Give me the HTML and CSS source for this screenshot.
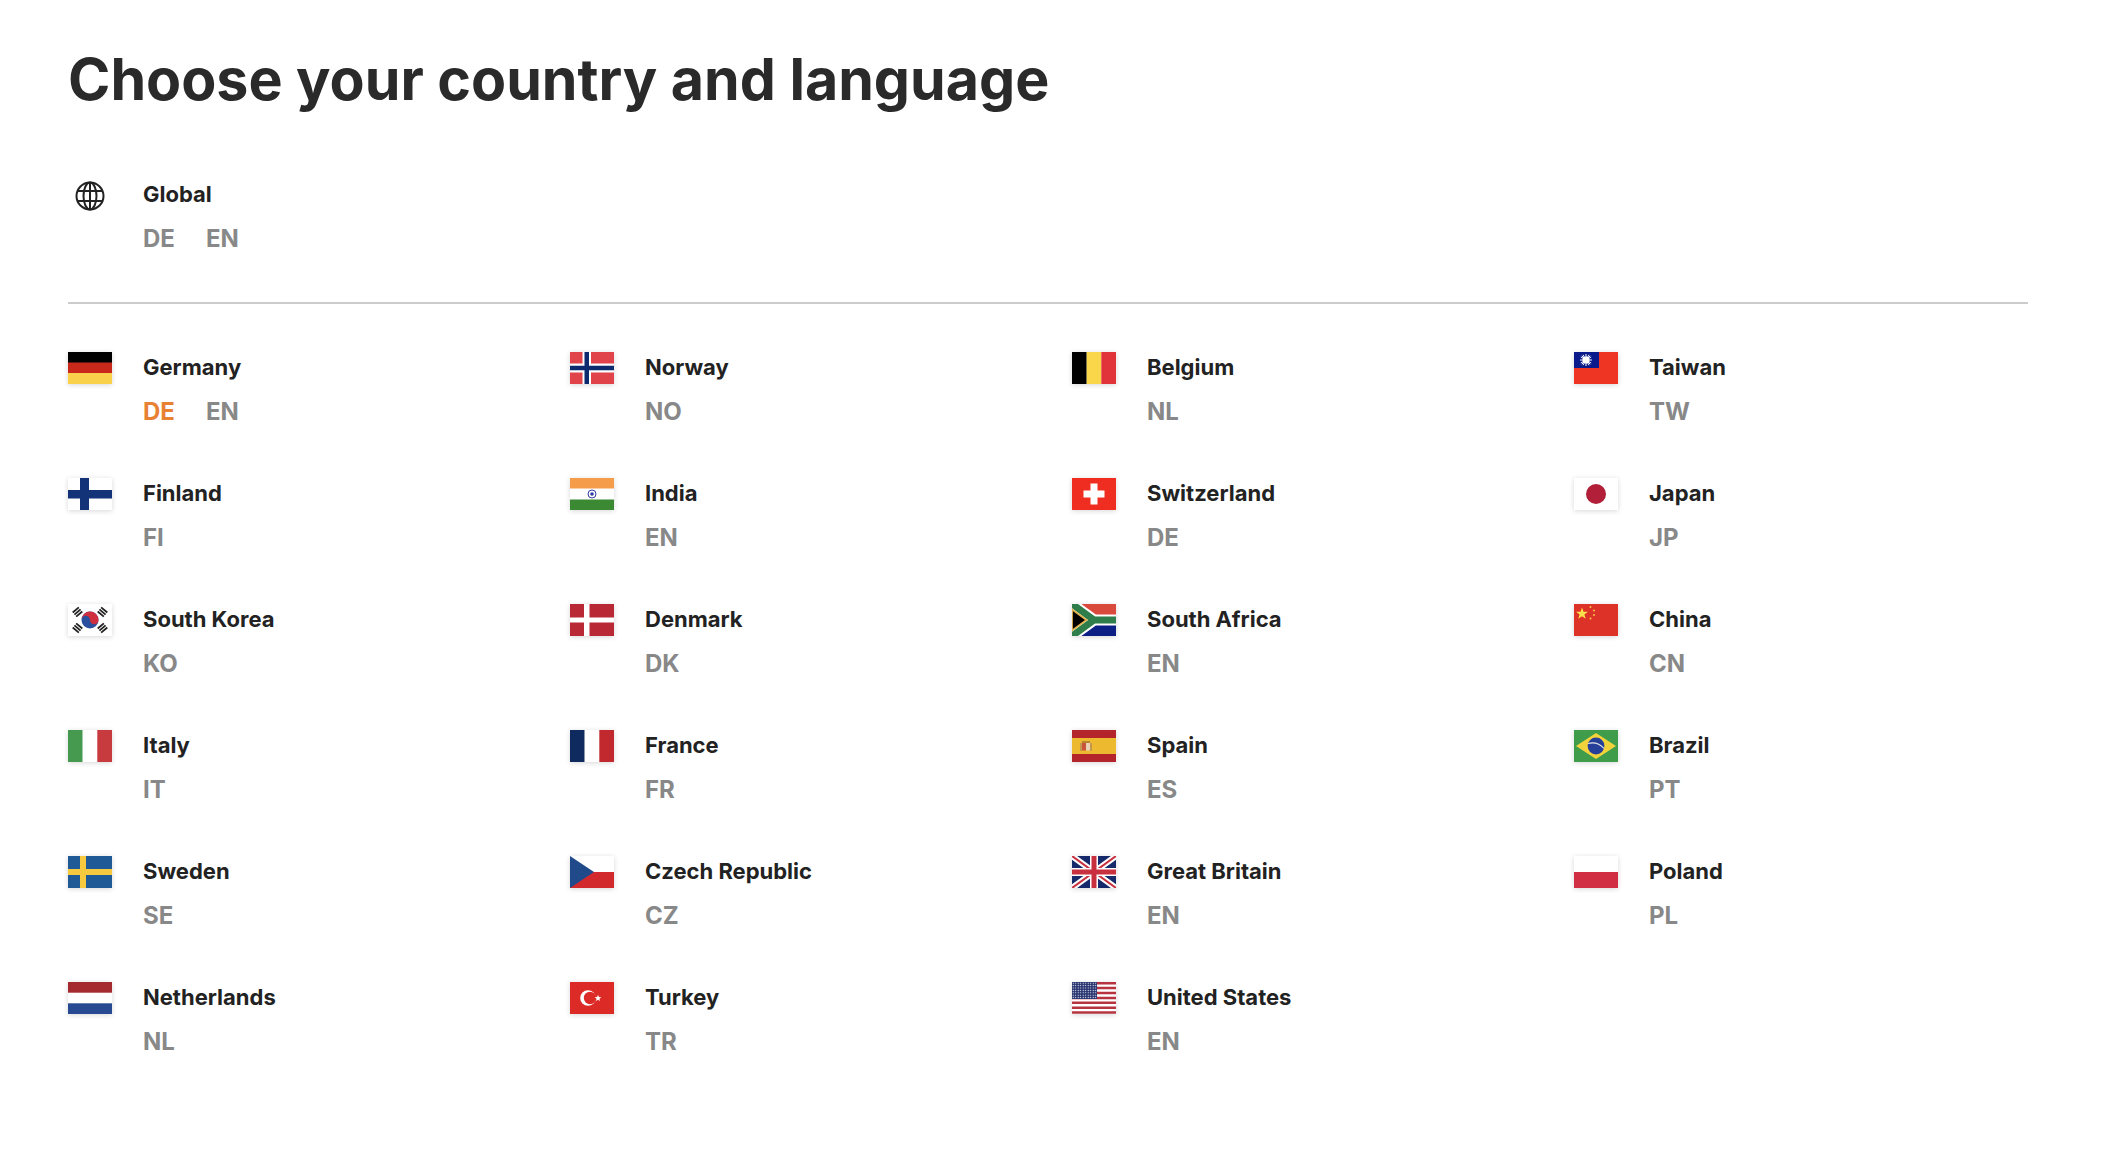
FILE: index.html
```html
<!DOCTYPE html>
<html lang="en">
<head>
<meta charset="utf-8">
<title>Choose your country and language</title>
<link rel="stylesheet" href="styles.css">
</head>
<body>
<main class="page">
<h1 class="title">Choose your country and language</h1>
<section class="global item">
  <div class="globe-box"><svg class="globe" viewBox="0 0 32 32" fill="none" stroke="#222" stroke-width="2"><circle cx="16" cy="16" r="13.5"/><ellipse cx="16" cy="16" rx="6.5" ry="13.5"/><path d="M16 2.5v27M3.5 11h25M3.5 21h25"/></svg></div>
  <div class="text"><div class="name">Global</div><div class="langs"><span>DE</span><span>EN</span></div></div>
</section>
<hr class="divider">
<section class="grid">

<div class="item"><svg class="flag" viewBox="0 0 44 32"><rect width="44" height="32" fill="#f9d14a"/><rect width="44" height="21" fill="#c8291b"/><rect width="44" height="10.5" fill="#000"/></svg><div class="text"><div class="name">Germany</div><div class="langs"><span class="active">DE</span><span>EN</span></div></div></div>

<div class="item"><svg class="flag" viewBox="0 0 44 32"><rect width="44" height="32" fill="#e0434a"/><path d="M12.5 0h8.500v32h-8.500zM0 11.500h44v9H0z" fill="#fff"/><path d="M14.500 0h4.500v32h-4.500zM0 13.800h44v4.400H0z" fill="#0b2b6e"/></svg><div class="text"><div class="name">Norway</div><div class="langs"><span>NO</span></div></div></div>

<div class="item"><svg class="flag" viewBox="0 0 44 32"><rect width="14.700" height="32" fill="#000"/><rect x="14.700" width="14.700" height="32" fill="#f9d64a"/><rect x="29.300" width="14.700" height="32" fill="#e0343a"/></svg><div class="text"><div class="name">Belgium</div><div class="langs"><span>NL</span></div></div></div>

<div class="item"><svg class="flag" viewBox="0 0 44 32"><rect width="44" height="32" fill="#ee3423"/><rect width="25" height="16" fill="#0a1a8a"/><g stroke="#fff" stroke-width="1"><path d="M12 2v12M6 8h12M7.800 3.800l8.400 8.400M16.200 3.800l-8.400 8.400M9 2.800l6 10.400M15 2.800L9 13.200M6.800 5l10.400 6M17.200 5L6.800 11"/></g><circle cx="12" cy="8" r="3.500" fill="#fff"/></svg><div class="text"><div class="name">Taiwan</div><div class="langs"><span>TW</span></div></div></div>

<div class="item"><svg class="flag" viewBox="0 0 44 32"><rect width="44" height="32" fill="#fff"/><path d="M12 0h9v32h-9zM0 12h44v8.500H0z" fill="#123377"/></svg><div class="text"><div class="name">Finland</div><div class="langs"><span>FI</span></div></div></div>

<div class="item"><svg class="flag" viewBox="0 0 44 32"><rect width="44" height="32" fill="#fff"/><rect width="44" height="10.500" fill="#f59c4a"/><rect y="21.500" width="44" height="10.500" fill="#3b8a33"/><circle cx="22" cy="16" r="4" fill="#fff" stroke="#2d3c9e"/><circle cx="22" cy="16" r="1.800" fill="#2d3c9e"/></svg><div class="text"><div class="name">India</div><div class="langs"><span>EN</span></div></div></div>

<div class="item"><svg class="flag" viewBox="0 0 44 32"><rect width="44" height="32" fill="#ef2e21"/><path d="M18.500 5.500h7v7h7v7h-7v7h-7v-7h-7v-7h7z" fill="#fff"/></svg><div class="text"><div class="name">Switzerland</div><div class="langs"><span>DE</span></div></div></div>

<div class="item"><svg class="flag" viewBox="0 0 44 32"><rect width="44" height="32" fill="#fff"/><circle cx="22" cy="16" r="10" fill="#b11f38"/></svg><div class="text"><div class="name">Japan</div><div class="langs"><span>JP</span></div></div></div>

<div class="item"><svg class="flag" viewBox="0 0 44 32"><rect width="44" height="32" fill="#fff"/><circle cx="22" cy="16" r="8.500" fill="#2a4f9e"/><path d="M13.500 16a8.500 8.500 0 0 1 17 0 4.250 4.250 0 0 1-8.500 0 4.250 4.250 0 0 0-8.500 0z" fill="#cf2f3f"/><g fill="#222"><path transform="translate(9.500 8) rotate(-40)" d="M-4-3.600h8v1.800h-8zM-4-.9h8v1.800h-8zM-4 1.800h8v1.800h-8z"/><path transform="translate(34.500 8) rotate(40)" d="M-4-3.600h8v1.800h-8zM-4-.9h8v1.800h-8zM-4 1.800h8v1.800h-8z"/><path transform="translate(9.500 24) rotate(40)" d="M-4-3.600h8v1.800h-8zM-4-.9h8v1.800h-8zM-4 1.800h8v1.800h-8z"/><path transform="translate(34.500 24) rotate(-40)" d="M-4-3.600h8v1.800h-8zM-4-.9h8v1.800h-8zM-4 1.800h8v1.800h-8z"/></g></svg><div class="text"><div class="name">South Korea</div><div class="langs"><span>KO</span></div></div></div>

<div class="item"><svg class="flag" viewBox="0 0 44 32"><rect width="44" height="32" fill="#b92835"/><path d="M14 0h5.500v32H14zM0 13.400h44v5.200H0z" fill="#fff"/></svg><div class="text"><div class="name">Denmark</div><div class="langs"><span>DK</span></div></div></div>

<div class="item"><svg class="flag" viewBox="0 0 44 32"><rect width="44" height="16" fill="#d9493c"/><rect y="16" width="44" height="16" fill="#0b1f85"/><path d="M0 0l22 16L0 32z" fill="#000"/><path d="M0 0l22 16h22M0 32l22-16" fill="none" stroke="#fff" stroke-width="11"/><path d="M0 0l22 16h22M0 32l22-16" fill="none" stroke="#2f7d4a" stroke-width="7"/><path d="M0 5.500L14.500 16 0 26.500z" fill="#000" stroke="#e3b04b" stroke-width="1.800"/></svg><div class="text"><div class="name">South Africa</div><div class="langs"><span>EN</span></div></div></div>

<div class="item"><svg class="flag" viewBox="0 0 44 32"><rect width="44" height="32" fill="#dd3228"/><path d="M8 3.500l1.500 4.300h4.500l-3.600 2.700 1.300 4.300L8 12.200l-3.700 2.600 1.300-4.300L2 7.800h4.500z" fill="#fbe14a"/><g fill="#f6c945"><circle cx="16.500" cy="3" r="1"/><circle cx="20" cy="6.500" r="1"/><circle cx="20" cy="11" r="1"/><circle cx="16.500" cy="14.500" r="1"/></g></svg><div class="text"><div class="name">China</div><div class="langs"><span>CN</span></div></div></div>

<div class="item"><svg class="flag" viewBox="0 0 44 32"><rect width="14.700" height="32" fill="#459a50"/><rect x="14.700" width="14.700" height="32" fill="#fff"/><rect x="29.300" width="14.700" height="32" fill="#c73a3e"/></svg><div class="text"><div class="name">Italy</div><div class="langs"><span>IT</span></div></div></div>

<div class="item"><svg class="flag" viewBox="0 0 44 32"><rect width="14.700" height="32" fill="#0f2a5e"/><rect x="14.700" width="14.700" height="32" fill="#fff"/><rect x="29.300" width="14.700" height="32" fill="#c1292e"/></svg><div class="text"><div class="name">France</div><div class="langs"><span>FR</span></div></div></div>

<div class="item"><svg class="flag" viewBox="0 0 44 32"><rect width="44" height="32" fill="#b3252a"/><rect y="8" width="44" height="16" fill="#edb92e"/><rect x="10" y="13" width="4" height="7.500" fill="#c8553a"/><rect x="14" y="13" width="4" height="7.500" fill="#e9d3b5"/><rect x="10" y="11" width="8" height="2" fill="#b8862e"/><path d="M9 13v8M19 13v8" stroke="#b58a5a" stroke-width="1.400"/></svg><div class="text"><div class="name">Spain</div><div class="langs"><span>ES</span></div></div></div>

<div class="item"><svg class="flag" viewBox="0 0 44 32"><rect width="44" height="32" fill="#3f9c4a"/><path d="M22 3l20 13-20 13L2 16z" fill="#f3d33c"/><circle cx="22" cy="16" r="8.400" fill="#26409a"/><path d="M14 13.500c6-1.500 12 .5 16 5" fill="none" stroke="#e6e6e6" stroke-width="1.100"/></svg><div class="text"><div class="name">Brazil</div><div class="langs"><span>PT</span></div></div></div>

<div class="item"><svg class="flag" viewBox="0 0 44 32"><rect width="44" height="32" fill="#1f5a96"/><path d="M12 0h6v32h-6zM0 13h44v6H0z" fill="#f7c93e"/></svg><div class="text"><div class="name">Sweden</div><div class="langs"><span>SE</span></div></div></div>

<div class="item"><svg class="flag" viewBox="0 0 44 32"><rect width="44" height="16" fill="#fff"/><rect y="16" width="44" height="16" fill="#d2292d"/><path d="M0 0l24 16L0 32z" fill="#214a8b"/></svg><div class="text"><div class="name">Czech Republic</div><div class="langs"><span>CZ</span></div></div></div>

<div class="item"><svg class="flag" viewBox="0 0 44 32"><rect width="44" height="32" fill="#15296b"/><path d="M0 0l44 32M44 0L0 32" stroke="#fff" stroke-width="6"/><path d="M0 0l44 32M44 0L0 32" stroke="#c8303f" stroke-width="2"/><path d="M18 0h8v32h-8zM0 12h44v8H0z" fill="#fff"/><path d="M19.500 0h5v32h-5zM0 13.500h44v5H0z" fill="#c8303f"/></svg><div class="text"><div class="name">Great Britain</div><div class="langs"><span>EN</span></div></div></div>

<div class="item"><svg class="flag" viewBox="0 0 44 32"><rect width="44" height="16" fill="#fff"/><rect y="16" width="44" height="16" fill="#d22e43"/></svg><div class="text"><div class="name">Poland</div><div class="langs"><span>PL</span></div></div></div>

<div class="item"><svg class="flag" viewBox="0 0 44 32"><rect width="44" height="32" fill="#fff"/><rect width="44" height="10.700" fill="#a52a30"/><rect y="21.300" width="44" height="10.700" fill="#274a92"/></svg><div class="text"><div class="name">Netherlands</div><div class="langs"><span>NL</span></div></div></div>

<div class="item"><svg class="flag" viewBox="0 0 44 32"><rect width="44" height="32" fill="#dc2b27"/><circle cx="18" cy="16" r="7.800" fill="#fff"/><circle cx="20" cy="16" r="6.200" fill="#dc2b27"/><path d="M28 12.800l.9 2.300 2.500.1-2 1.500.7 2.400-2.100-1.400-2.100 1.400.7-2.400-2-1.500 2.500-.1z" fill="#fff"/></svg><div class="text"><div class="name">Turkey</div><div class="langs"><span>TR</span></div></div></div>

<div class="item"><svg class="flag" viewBox="0 0 44 32"><defs><pattern id="us-stars" width="2.500" height="2.400" patternUnits="userSpaceOnUse"><circle cx="1.200" cy="1.200" r=".6" fill="#fff"/></pattern></defs><rect width="44" height="32" fill="#fff"/><path d="M0 1.200h44M0 6.100h44M0 11h44M0 15.900h44M0 20.800h44M0 25.700h44M0 30.600h44" stroke="#b5343f" stroke-width="2.460"/><rect width="25" height="17" fill="#26336f"/><rect width="25" height="17" fill="url(#us-stars)"/></svg><div class="text"><div class="name">United States</div><div class="langs"><span>EN</span></div></div></div>

</section>
</main>
</body>
</html>
```
FILE: styles.css
```css
* { box-sizing: border-box; }
html, body { margin: 0; background: #fff; }
body { font-family: Inter, "Liberation Sans", sans-serif; color: #222; }
.page { padding: 45px 76px 0 68px; }
.title { margin: 0 0 67px; font-size: 57.3px; line-height: 68px; font-weight: 700; color: #2a2a2a; }
.item { display: flex; gap: 31px; height: 126px; }
.global { height: auto; padding-bottom: 49px; }
.flag { width: 44px; height: 32px; flex: none; display: block; box-shadow: 0 1px 5px rgba(0,0,0,.16); }
.globe-box { width: 44px; flex: none; display: flex; justify-content: center; }
.globe { width: 32px; height: 32px; }
.name { font-size: 22px; line-height: 28px; font-weight: 650; color: #222; }
.langs { display: flex; gap: 31px; margin-top: 17px; font-size: 24px; line-height: 28px; font-weight: 650; color: #888; }
.active { color: #e98135; }
.divider { margin: 0 0 48px; border: 0; border-top: 2px solid #ccc; }
.grid { display: grid; grid-template-columns: repeat(4, 502px); }
.grid .text { margin-top: 1px; }
```
